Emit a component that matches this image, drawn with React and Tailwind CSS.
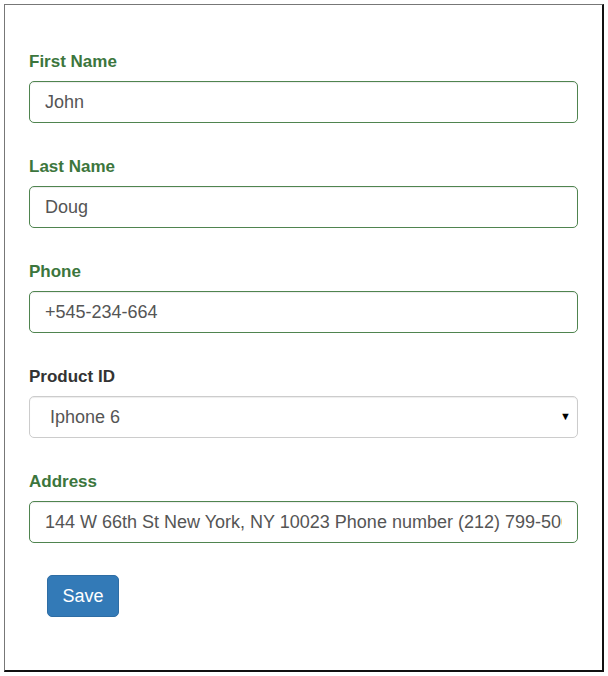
import React from "react";

const Field = ({ label, value, ok = true }) => (
  <div className="mb-[34px]">
    <label className={`block text-[17px] leading-5 font-bold mb-[9px] ${ok ? "text-[#3c763d]" : "text-[#333]"}`}>
      {label}
    </label>
    <input
      readOnly
      value={value}
      className="block w-full h-[42px] px-[15px] text-[18px] text-[#555] bg-white border border-[#4f844f] rounded-[5px] outline-none shadow-[inset_0_1px_1px_rgba(0,0,0,0.075)]"
    />
  </div>
);

const App = () => {
  return (
    <div className="w-[608px] h-[676px] bg-white pt-[4px] pl-[4px]" style={{ fontFamily: '"Liberation Sans", Arial, sans-serif' }}>
      <div className="w-[600px] h-[668px] border-l border-t border-[#777] border-r-2 border-b-2 border-r-[#111] border-b-[#111] px-6 pt-[47px]">
        <Field label="First Name" value="John" />
        <Field label="Last Name" value="Doug" />
        <Field label="Phone" value="+545-234-664" />

        <div className="mb-[34px]">
          <label className="block text-[17px] leading-5 font-bold mb-[9px] text-[#333]">Product ID</label>
          <div className="relative">
            <select
              defaultValue="Iphone 6"
              className="block w-full h-[42px] pl-[20px] pr-8 text-[18px] text-[#555] bg-white border border-[#ccc] rounded-[5px] appearance-none outline-none shadow-[inset_0_1px_1px_rgba(0,0,0,0.075)]"
            >
              <option>Iphone 6</option>
              <option>Iphone 7</option>
            </select>
            <span className="absolute right-[7px] top-[12px] text-[11px] text-black pointer-events-none">▼</span>
          </div>
        </div>

        <div className="mb-[32px]">
          <label className="block text-[17px] leading-5 font-bold mb-[9px] text-[#3c763d]">Address</label>
          <input
            readOnly
            value="144 W 66th St New York, NY 10023 Phone number (212) 799-5000"
            className="block w-full h-[42px] px-[15px] text-[18px] text-[#555] bg-white border border-[#4f844f] rounded-[5px] outline-none shadow-[inset_0_1px_1px_rgba(0,0,0,0.075)]"
          />
        </div>

        <button className="ml-[18px] w-[72px] h-[42px] bg-[#337ab7] border border-[#2e6da4] rounded-[5px] text-white text-[18px]">
          Save
        </button>
      </div>
    </div>
  );
};

export default App;
